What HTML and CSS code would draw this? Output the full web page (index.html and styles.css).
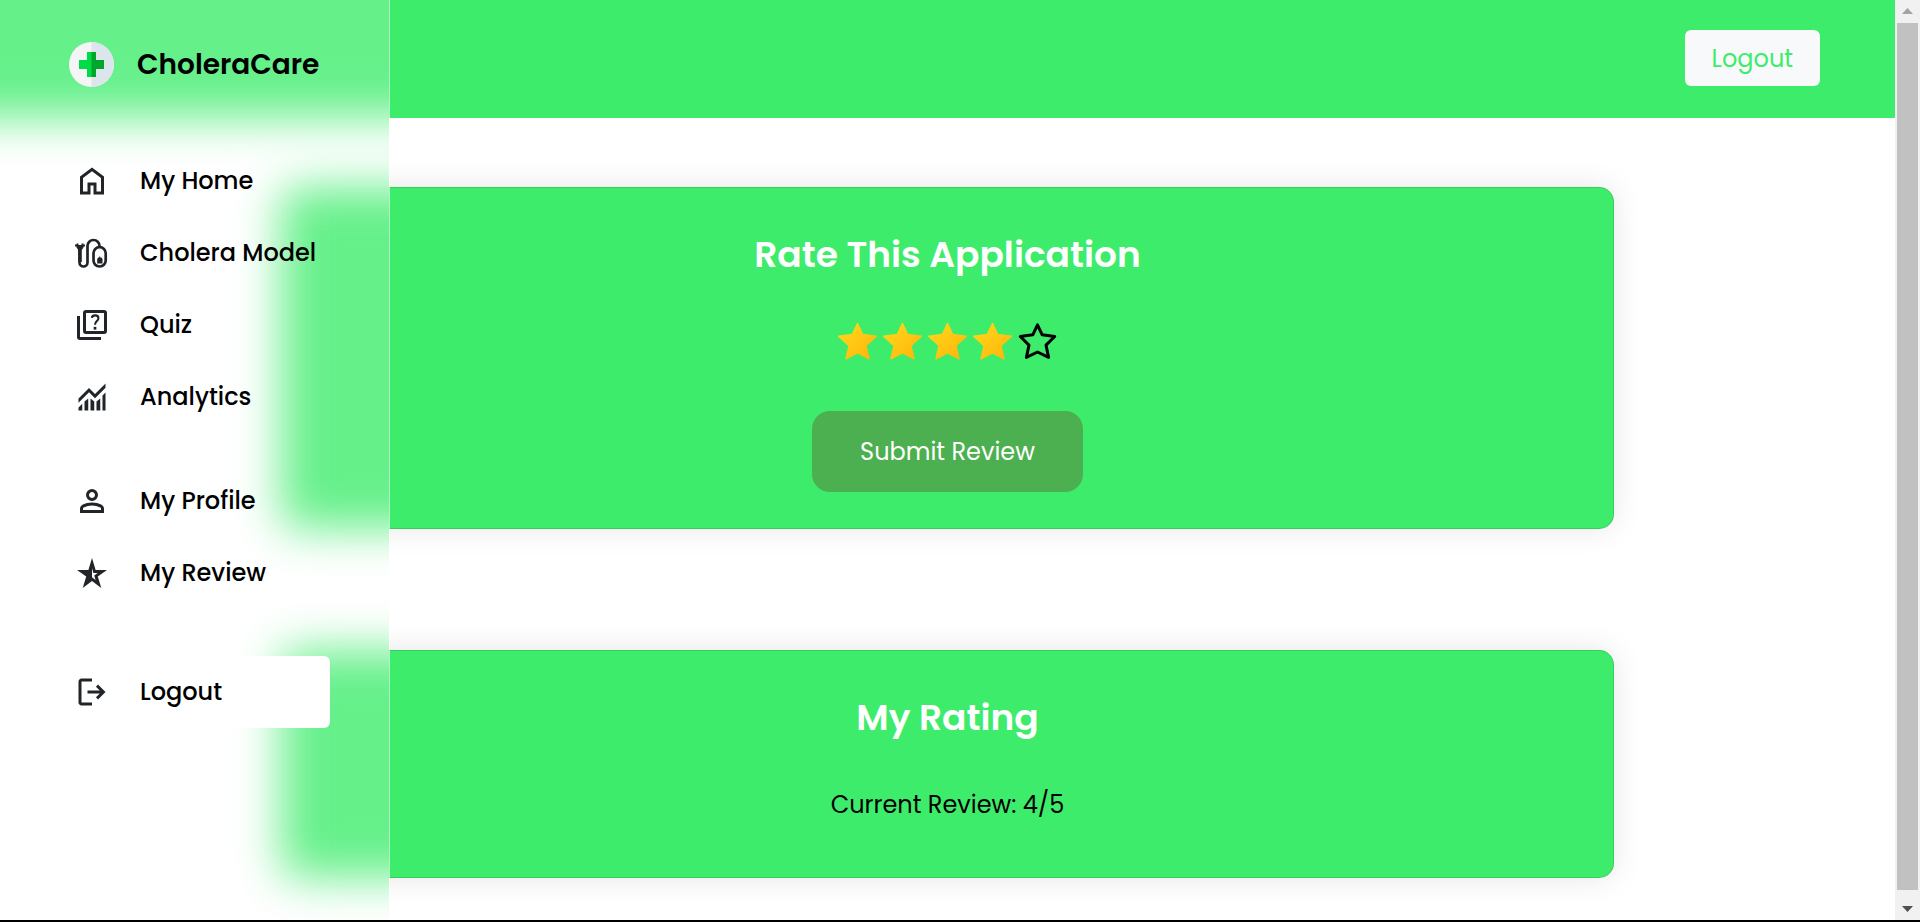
FILE: index.html
```html
<!DOCTYPE html>
<html lang="en">
<head>
<meta charset="utf-8">
<meta name="viewport" content="width=device-width, initial-scale=1">
<title>CholeraCare</title>
<link rel="stylesheet" href="styles.css">
</head>
<body>
<div class="window">
  <div class="page">
    <header class="topbar">
      <button class="logout-button" type="button">Logout</button>
    </header>
    <main class="content">
      <section class="card">
        <h2 class="card-title">Rate This Application</h2>
        <div class="stars">
          <button class="star" type="button" aria-label="1 star"><svg viewBox="0 0 45 45"><defs><linearGradient id="gold" x1="0" y1="0" x2="1" y2="1"><stop offset="0" stop-color="#ffda1c"/><stop offset="1" stop-color="#ffb30a"/></linearGradient></defs><path class="star-full" d="M22.5 5.5 27.6 16.4 41.3 18.3 30.9 27.7 34 40.8 22.5 34.8 11 40.8 14.1 27.7 3.7 18.3 17.4 16.4Z"/></svg></button>
          <button class="star" type="button" aria-label="2 stars"><svg viewBox="0 0 45 45"><path class="star-full" d="M22.5 5.5 27.6 16.4 41.3 18.3 30.9 27.7 34 40.8 22.5 34.8 11 40.8 14.1 27.7 3.7 18.3 17.4 16.4Z"/></svg></button>
          <button class="star" type="button" aria-label="3 stars"><svg viewBox="0 0 45 45"><path class="star-full" d="M22.5 5.5 27.6 16.4 41.3 18.3 30.9 27.7 34 40.8 22.5 34.8 11 40.8 14.1 27.7 3.7 18.3 17.4 16.4Z"/></svg></button>
          <button class="star" type="button" aria-label="4 stars"><svg viewBox="0 0 45 45"><path class="star-full" d="M22.5 5.5 27.6 16.4 41.3 18.3 30.9 27.7 34 40.8 22.5 34.8 11 40.8 14.1 27.7 3.7 18.3 17.4 16.4Z"/></svg></button>
          <button class="star" type="button" aria-label="5 stars"><svg viewBox="0 0 45 45"><path class="star-empty" d="M22.5 6.8 27.2 16.8 39.7 18.5 31 27.1 33.6 39.4 22.5 34 11.4 39.4 14 27.1 5.3 18.5 17.8 16.8Z"/></svg></button>
        </div>
        <button class="submit" type="button">Submit Review</button>
      </section>
      <section class="card">
        <h2 class="card-title">My Rating</h2>
        <p class="current">Current Review: 4/5</p>
      </section>
    </main>
  </div>
  <div class="scrollbar" aria-hidden="true">
    <svg class="arrow arrow-up" viewBox="0 0 11 6"><path d="M0 6 5.5 0 11 6Z"/></svg>
    <div class="thumb"></div>
    <svg class="arrow" viewBox="0 0 11 6"><path d="M0 0 5.5 6 11 0Z"/></svg>
  </div>
  <aside class="sidebar">
    <div class="frost" aria-hidden="true">
      <div class="frost-bar"></div>
      <div class="frost-card frost-tall"></div>
      <div class="frost-card frost-short"></div>
    </div>
    <div class="brand">
      <svg class="logo" viewBox="0 0 45 45" aria-hidden="true">
        <circle cx="22.5" cy="22.5" r="22.5" fill="#f5f5f5"/>
        <path d="M22.5 0a22.5 22.5 0 0 1 0 45Z" fill="#dce4ec"/>
        <path d="M18 10h9v8h8v9h-8v8h-9v-8h-8v-9h8Z" fill="#00dc45"/>
        <path d="M22.5 10H27v8h8v9h-8v8h-4.500Z" fill="#00a62c"/>
      </svg>
      <span class="brand-name">CholeraCare</span>
    </div>
    <nav class="menu">
      <a class="item" href="#home"><svg class="icon" viewBox="0 -960 960 960"><path d="M240-200h120v-240h240v240h120v-360L480-740 240-560v360Zm-80 80v-480l320-240 320 240v480H520v-240h-80v240H160Z"/></svg>My Home</a>
      <a class="item" href="#model"><svg class="icon" viewBox="0 0 36 36"><path d="M1 9.500h1.500V8.500h2V10h3V8.500h2V9.500H11v2H9.500v1L7.800 15V27H4.300V15L2.500 12.500v-1H1Z"/><path class="line" d="M5.500 13V27.500a4 4 0 0 0 8 0V11a6 6 0 0 1 12 0v2"/><rect class="line" x="19.500" y="12.200" width="12.200" height="19.300" rx="6"/><path d="M23.200 24l1-1.500h1v-1h1v1h1.300l1 1.500v4.500h-5.300Z"/></svg>Cholera Model</a>
      <a class="item" href="#quiz"><svg class="icon" viewBox="0 0 24 24"><path d="M8 2h12q2 0 2 2v12q0 2-2 2H8q-2 0-2-2V4q0-2 2-2Zm0 2v12h12V4ZM4 22q-2 0-2-2V6h2v14h14v2Z"/><path class="mark" d="M11.900 7.200c.3-2.200 4.400-2.200 4.400.3 0 1.900-2.300 1.900-2.300 4.300"/><path d="M13.100 13.200h1.800v1.900h-1.800Z"/></svg>Quiz</a>
      <a class="item" href="#analytics"><svg class="icon" viewBox="0 -960 960 960"><path d="M120-120v-80l100-100v180H120Zm160 0v-240l100-80v320H280Zm160 0v-320l100 81v239H440Zm160 0v-239l100-80v319H600Zm160 0v-400l80-80v480h-80ZM120-327v-113l280-280 160 160 280-280v113L560-447 400-607 120-327Z"/></svg>Analytics</a>
    </nav>
    <nav class="menu account">
      <a class="item" href="#profile"><svg class="icon" viewBox="0 -960 960 960"><path d="M480-480q-66 0-113-47t-47-113q0-66 47-113t113-47q66 0 113 47t47 113q0 66-47 113t-113 47ZM160-160v-112q0-34 17.500-62.500T224-378q62-31 126-46.500T480-440q66 0 130 15.500T736-378q29 15 46.500 43.500T800-272v112H160Zm80-80h480v-32q0-11-5.500-20T700-306q-54-27-109-40.500T480-360q-56 0-111 13.500T260-306q-9 5-14.500 14t-5.500 20v32Zm240-320q33 0 56.500-23.500T560-640q0-33-23.500-56.500T480-720q-33 0-56.500 23.500T400-640q0 33 23.500 56.500T480-560Z"/></svg>My Profile</a>
      <a class="item" href="#review"><svg class="icon" viewBox="0 -1000 960 960"><path d="M480-644v236l96 74-36-122 90-64H518l-38-124ZM233-120l93-304L80-600h304l96-320 96 320h304L634-424l93 304-247-188-247 188Z"/></svg>My Review</a>
    </nav>
    <nav class="menu session">
      <a class="item active" href="#logout"><svg class="icon" viewBox="0 -960 960 960"><path d="M200-120q-33 0-56.500-23.500T120-200v-560q0-33 23.500-56.500T200-840h280v80H200v560h280v80H200Zm440-160-55-58 102-102H360v-80h327L585-622l55-58 200 200-200 200Z"/></svg>Logout</a>
    </nav>
  </aside>
</div>
</body>
</html>
```
FILE: styles.css
```css
* {
  box-sizing: border-box;
}

body {
  margin: 0;
  background: #000;
  color: #000;
  font-family: Poppins, Inter, "Noto Sans", sans-serif;
  font-size: 24px;
  line-height: 36px;
}

button {
  border: 0;
  font: inherit;
  cursor: pointer;
}

.window {
  position: relative;
  display: flex;
  height: calc(100vh - 2px);
  background: #fff;
  overflow: hidden;
}

.page {
  flex: 1;
  min-width: 0;
  background: #fff;
}

.topbar {
  display: flex;
  justify-content: flex-end;
  padding: 30px 75px 32px;
  background: #3eec6c;
}

.logout-button {
  padding: 11px 27px 9px;
  border-radius: 6px;
  background: #f8f9fa;
  color: #3eec6c;
}

.content {
  display: flex;
  flex-direction: column;
  gap: 121px;
  padding: 69px 281px 0;
}

.card {
  display: flex;
  flex-direction: column;
  align-items: center;
  padding: 40px 24px 36px;
  border: 1px solid rgba(0, 0, 0, 0.125);
  border-radius: 15px;
  background: #3eec6c;
  box-shadow: 0 0 30px rgba(0, 0, 0, 0.1);
}

.card-title {
  margin: 0;
  color: #fff;
  font-size: 36px;
  font-weight: 600;
  line-height: 54px;
}

.stars {
  display: flex;
  margin: 36px 0 48px;
}

.star {
  display: block;
  width: 45px;
  height: 45px;
  padding: 0;
  background: none;
}

.star svg {
  display: block;
}

.star-full {
  fill: url(#gold);
  stroke: url(#gold);
  stroke-width: 1.5;
  stroke-linejoin: round;
}

.star-empty {
  fill: none;
  stroke: #000;
  stroke-width: 3;
  stroke-linejoin: round;
}

.submit {
  padding: 23px 48px 22px;
  border-radius: 18px;
  background: #4caf50;
  color: #fff;
}

.current {
  margin: 42px 0 18px;
}

.scrollbar {
  display: flex;
  flex-direction: column;
  align-items: center;
  gap: 9px;
  width: 25px;
  padding: 8px 0;
  background: #f1f1f1;
}

.thumb {
  flex: 1;
  width: 21px;
  margin-bottom: 7px;
  background: #c1c1c1;
}

.arrow {
  width: 11px;
  height: 6px;
  fill: #505050;
}

.arrow-up {
  fill: #a3a3a3;
}

.sidebar {
  position: absolute;
  z-index: 1;
  top: 0;
  bottom: 0;
  left: 0;
  width: 390px;
  padding: 42px 59px 0 60px;
  border-right: 1px solid rgba(255, 255, 255, 0.6);
  background: #fff;
  background-clip: padding-box;
  overflow: hidden;
}

/* Soft image of the header and cards behind the frosted sidebar */
.frost {
  position: absolute;
  inset: -90px;
  z-index: -1;
  display: flex;
  flex-direction: column;
  filter: blur(23px);
}

.frost-bar,
.frost-card {
  flex: none;
  background: #65f08a;
}

.frost-bar {
  height: 208px;
  margin-bottom: 69px;
}

.frost-card {
  margin: 0 0 121px 371px;
  border-radius: 15px 0 0 15px;
}

.frost-tall {
  height: 342px;
}

.frost-short {
  height: 228px;
}

.brand {
  display: flex;
  align-items: center;
  gap: 23px;
  padding-left: 9px;
}

.logo {
  width: 45px;
  height: 45px;
}

.brand-name {
  font-size: 28px;
  font-weight: 600;
}

.menu {
  display: flex;
  flex-direction: column;
  margin-top: 58px;
}

.account {
  margin-top: 32px;
}

.session {
  margin-top: 47px;
}

.item {
  display: flex;
  align-items: center;
  gap: 30px;
  height: 72px;
  padding-left: 14px;
  border-radius: 6px;
  color: #000;
  font-weight: 500;
  text-decoration: none;
}

.active {
  background: #fff;
}

.icon {
  flex: none;
  width: 36px;
  height: 36px;
  fill: #212529;
}

.line {
  fill: none;
  stroke: #212529;
  stroke-width: 2.7;
}

.mark {
  fill: none;
  stroke: #212529;
  stroke-width: 1.4;
}
```
